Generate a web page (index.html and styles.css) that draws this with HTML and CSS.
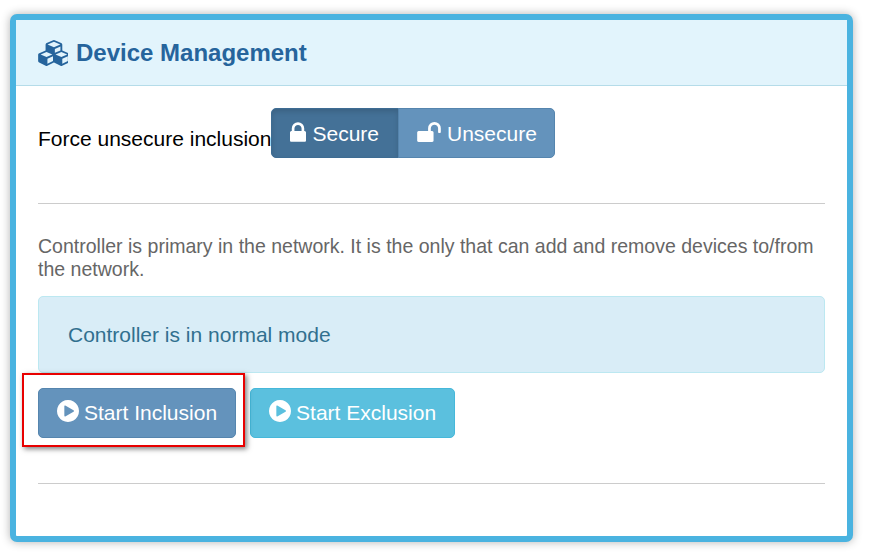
FILE: index.html
```html
<!DOCTYPE html>
<html>
<head>
	<meta charset="UTF-8">
	<title>Device Management</title>
	<link rel="stylesheet" href="styles.css">
</head>
<body>
	<section class="panel">
		<header class="panel-heading">
			<svg class="icon-cubes" viewBox="0 0 2048 1792"><path d="M640 1632l384-192v-314l-384 164v342zm-64-454l404-173-404-173-404 173zm1088 454l384-192v-314l-384 164v342zm-64-454l404-173-404-173-404 173zm-448-293l384-165v-266l-384 164v267zm-64-379l441-189-441-189-441 189zm1088 518v416q0 36-19 67t-52 47l-448 224q-25 14-57 14t-57-14l-448-224q-4-2-7-4-2 2-7 4l-448 224q-25 14-57 14t-57-14l-448-224q-33-16-52-47t-19-67v-416q0-38 21.500-70t56.500-48l434-186v-400q0-38 21.500-70t56.500-48l448-192q23-10 50-10t50 10l448 192q35 16 56.500 48t21.500 70v400l434 186q36 16 57 48t21 70z"/></svg>
			<h2 class="panel-title">Device Management</h2>
		</header>
		<div class="panel-body">
			<div class="secure-row">
				<span class="secure-label">Force unsecure inclusion</span>
				<div class="btn-group">
					<button class="btn btn-primary active"><svg class="icon icon-lock" viewBox="320 128 1152 1408"><path d="M640 768h512v-192q0-106-75-181t-181-75-181 75-75 181v192zm832 96v576q0 40-28 68t-68 28h-960q-40 0-68-28t-28-68v-576q0-40 28-68t68-28h32v-192q0-184 132-316t316-132 316 132 132 316v192h32q40 0 68 28t28 68z"/></svg>Secure</button>
					<button class="btn btn-primary"><svg class="icon icon-unlock" viewBox="64 128 1664 1408"><path d="M1728 576v256q0 26-19 45t-45 19h-64q-26 0-45-19t-19-45v-256q0-106-75-181t-181-75-181 75-75 181v192h96q40 0 68 28t28 68v576q0 40-28 68t-68 28h-960q-40 0-68-28t-28-68v-576q0-40 28-68t68-28h672v-192q0-185 131.500-316.500t316.500-131.500 316.500 131.500 131.500 316.500z"/></svg>Unsecure</button>
				</div>
			</div>
			<hr>
			<p class="note">Controller is primary in the network. It is the only that can add and remove devices to/from the network.</p>
			<div class="alert">Controller is in normal mode</div>
			<div class="actions">
				<div class="marked">
					<button class="btn btn-primary"><svg class="icon icon-play" viewBox="128 128 1536 1536"><path d="M896 128q209 0 385.500 103t279.500 279.500 103 385.500-103 385.500-279.500 279.500-385.500 103-385.500-103-279.500-279.500-103-385.500 103-385.500 279.500-279.500 385.500-103zm384 823q32-18 32-55t-32-55l-544-320q-31-19-64-1-32 19-32 56v640q0 37 32 56 16 8 32 8 17 0 32-9z"/></svg>Start Inclusion</button>
					<div class="mark-box"></div>
				</div>
				<button class="btn btn-info"><svg class="icon icon-play" viewBox="128 128 1536 1536"><path d="M896 128q209 0 385.500 103t279.500 279.500 103 385.500-103 385.500-279.500 279.500-385.500 103-385.500-103-279.500-279.500-103-385.500 103-385.500 279.500-279.500 385.500-103zm384 823q32-18 32-55t-32-55l-544-320q-31-19-64-1-32 19-32 56v640q0 37 32 56 16 8 32 8 17 0 32-9z"/></svg>Start Exclusion</button>
			</div>
			<hr>
		</div>
	</section>
</body>
</html>
```

FILE: styles.css
```css
html, body {
	height: 100%;
}
body {
	margin: 0;
	padding: 14px 20px 11px 10px;
	box-sizing: border-box;
	background: #fff;
	font-family: "Liberation Sans", Arial, sans-serif;
	font-size: 21px;
	color: #000;
}
.panel {
	height: 528px;
	box-sizing: border-box;
	border: 6px solid #4ab3e0;
	border-radius: 7px;
	background: #fff;
	box-shadow: 0 0 10px rgba(0, 0, 0, 0.3);
}
.panel-heading {
	display: flex;
	align-items: center;
	gap: 8px;
	height: 66px;
	box-sizing: border-box;
	padding: 0 22px;
	background: #e2f4fc;
	border-bottom: 1px solid #b5dce9;
}
.panel-title {
	margin: 0;
	font-size: 24px;
	font-weight: bold;
	color: #26649c;
}
.icon-cubes {
	width: 30px;
	height: 26px;
	fill: #26649c;
}
.panel-body {
	padding: 22px 22px 0;
}
.secure-row {
	display: flex;
	align-items: center;
}
.secure-label {
	position: relative;
	top: 6px;
}
.btn-group {
	display: flex;
}
.btn {
	display: inline-flex;
	align-items: center;
	height: 50px;
	box-sizing: border-box;
	padding: 0 18px;
	border: 1px solid transparent;
	border-radius: 5px;
	font-family: inherit;
	font-size: 21px;
	color: #fff;
}
.btn-primary {
	background: #6493bc;
	border-color: #5585ae;
}
.btn-primary.active {
	background: #447197;
	border-color: #3e6c93;
	box-shadow: inset 0 3px 5px rgba(0, 0, 0, 0.125);
}
.btn-info {
	background: #5bc0de;
	border-color: #46b8da;
}
.btn-group .btn {
	padding-top: 1px;
}
.btn-group .btn:first-child {
	border-radius: 5px 0 0 5px;
	padding-right: 19px;
}
.btn-group .btn:last-child {
	border-radius: 0 5px 5px 0;
	margin-left: -1px;
	padding-right: 17px;
}
.icon {
	fill: #fff;
	position: relative;
	top: -2px;
	margin-right: 6px;
}
.icon-lock {
	width: 16px;
	height: 20px;
}
.icon-unlock {
	width: 24px;
	height: 20px;
}
.icon-play {
	width: 22px;
	height: 22px;
	margin-right: 5px;
}
hr {
	margin: 45px 0 0;
	border: 0;
	border-top: 1px solid #ccc;
}
.note {
	margin: 31px 0 0;
	line-height: 23px;
	font-size: 19.52px;
	color: #666;
}
.alert {
	margin-top: 15px;
	height: 77px;
	box-sizing: border-box;
	padding: 0 29px;
	display: flex;
	align-items: center;
	background: #d9edf7;
	border: 1px solid #bce8f1;
	border-radius: 5px;
	color: #31708f;
}
.actions {
	display: flex;
	gap: 14px;
	margin-top: 15px;
}
.marked {
	position: relative;
}
.mark-box {
	position: absolute;
	top: -15px;
	left: -16px;
	right: -9px;
	bottom: -9px;
	border: 2px solid #e80000;
	box-shadow: 2px 2px 5px rgba(0, 0, 0, 0.5);
}
```
